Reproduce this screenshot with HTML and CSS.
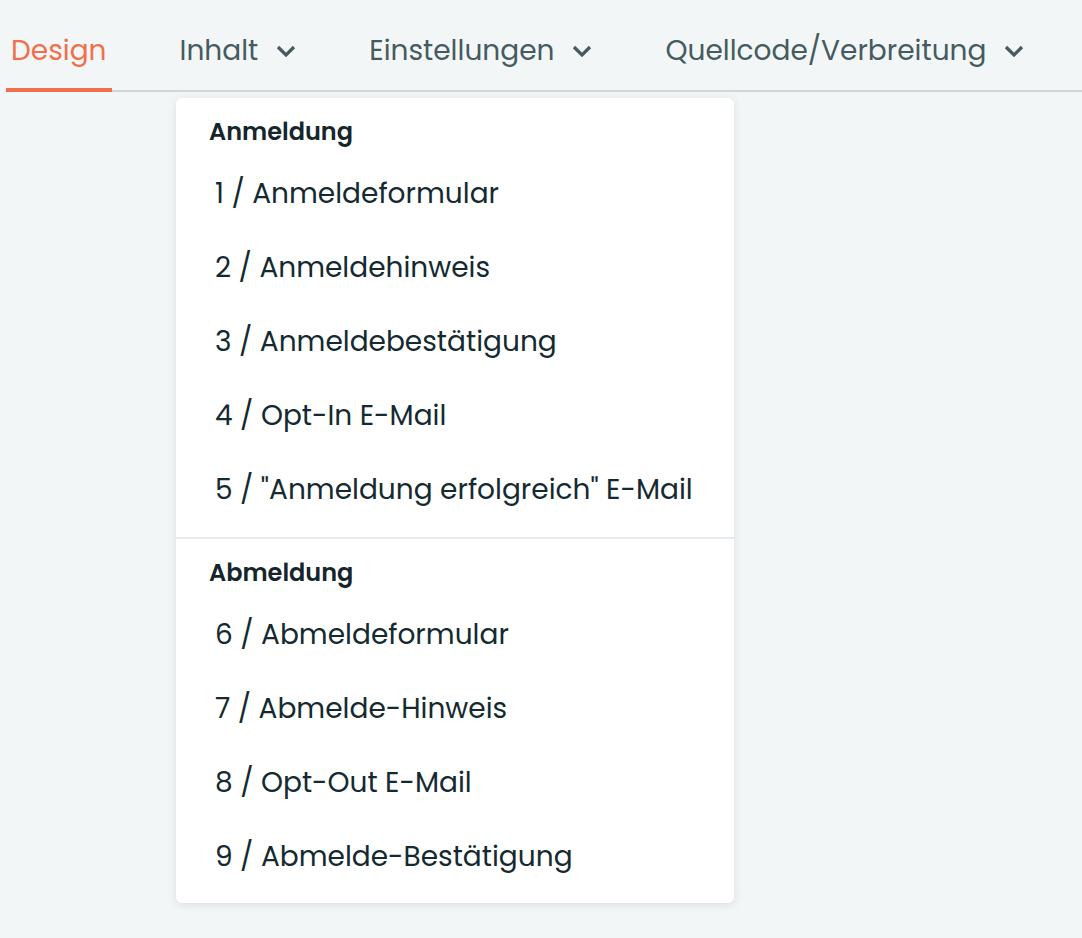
FILE: index.html
```html
<!DOCTYPE html>
<html lang="de">
<head>
  <meta charset="UTF-8" />
  <meta name="viewport" content="width=device-width, initial-scale=1.0"/>
  <title>Newsletter Formular</title>
  <link rel="stylesheet" href="styles.css">
</head>
<body>

  <!-- Tab bar -->
  <nav class="tabs">
    <a class="tab active" href="#">Design</a>
    <a class="tab" href="#">Inhalt
      <svg class="chevron" viewBox="0 0 20 12"><path d="M2 2 L10 10 L18 2"/></svg>
    </a>
    <a class="tab" href="#">Einstellungen
      <svg class="chevron" viewBox="0 0 20 12"><path d="M2 2 L10 10 L18 2"/></svg>
    </a>
    <a class="tab" href="#">Quellcode/Verbreitung
      <svg class="chevron" viewBox="0 0 20 12"><path d="M2 2 L10 10 L18 2"/></svg>
    </a>
  </nav>

  <!-- Inhalt dropdown -->
  <div class="dropdown">
    <div class="group">
      <h4>Anmeldung</h4>
      <a class="item" href="#">1 / Anmeldeformular</a>
      <a class="item" href="#">2 / Anmeldehinweis</a>
      <a class="item" href="#">3 / Anmeldebestätigung</a>
      <a class="item" href="#">4 / Opt-In E-Mail</a>
      <a class="item" href="#">5 / "Anmeldung erfolgreich" E-Mail</a>
    </div>
    <div class="group">
      <h4>Abmeldung</h4>
      <a class="item" href="#">6 / Abmeldeformular</a>
      <a class="item" href="#">7 / Abmelde-Hinweis</a>
      <a class="item" href="#">8 / Opt-Out E-Mail</a>
      <a class="item" href="#">9 / Abmelde-Bestätigung</a>
    </div>
  </div>

</body>
</html>
```

FILE: styles.css
```css
body {
  margin: 0;
  font-family: Poppins, Inter, "Open Sans", sans-serif;
  background: #f3f6f7;
  color: #172a2f;
  height: 938px;
  overflow: hidden;
}

.tabs {
  display: flex;
  gap: 63px;
  margin: 0 0 0 6px;
  border-bottom: 2px solid #cfd6d9;
  height: 90px;
  align-items: stretch;
}

.tab {
  display: flex;
  align-items: center;
  gap: 18px;
  padding: 11px 5px 0;
  font-size: 28px;
  color: #465b60;
  text-decoration: none;
}

.tab.active {
  color: #f0704b;
  margin-bottom: -2px;
  border-bottom: 4px solid #f0704b;
  padding-top: 13px;
}

.chevron {
  width: 20px;
  height: 12px;
  fill: none;
  stroke: #465b60;
  stroke-width: 3.2;
}

.dropdown {
  margin: 6px 0 0 176px;
  width: 558px;
  background: #fff;
  border-radius: 6px;
  box-shadow: 0 2px 8px rgba(40, 60, 70, 0.12);
}

.group {
  padding: 20px 0 10px;
}

.group + .group {
  border-top: 2px solid #e4eaed;
  padding-bottom: 9px;
}

.group h4 {
  margin: 0 0 11px;
  padding-left: 33px;
  font-size: 24px;
  line-height: 28px;
  font-weight: 600;
  color: #14262b;
}

.item {
  display: flex;
  align-items: center;
  height: 74px;
  padding-left: 39px;
  font-size: 28px;
  color: #142a30;
  text-decoration: none;
}
```
